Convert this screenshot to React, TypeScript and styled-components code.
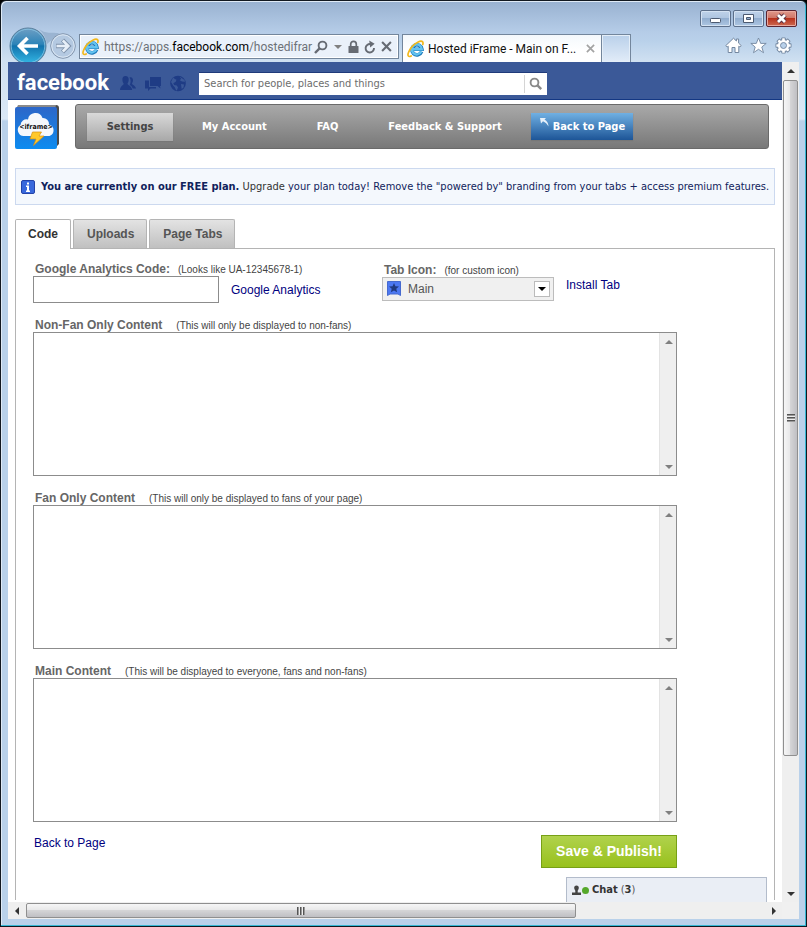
import React from "react";
import styled, { createGlobalStyle, css } from "styled-components";

const ui = `"DejaVu Sans Condensed", "Noto Sans", sans-serif`;
const chrome = `Roboto, "Noto Sans", sans-serif`;
const arial = `"Liberation Sans", Arial, sans-serif`;

const Global = createGlobalStyle`
  *, *::before, *::after { box-sizing: border-box; }
  body { margin: 0; background: #000; font-family: ${arial}; }
  button, input, textarea, select { font: inherit; margin: 0; border-radius: 0; }
  svg { display: block; flex: none; }
`;

/* ---------- window frame ---------- */

const Window = styled.div`
  display: flex;
  flex-direction: column;
  min-height: 100vh;
  padding: 0 7px 7px;
  border: 1px solid #111820;
  border-radius: 6px 6px 0 0;
  background: linear-gradient(#98b1d0 0, #a9c1de 18px, #b6cde8 32px, #b9d1ea 40px, #cfe0f1 60px, #dbe8f5 118px, #b9d1ea 120px);
  box-shadow: inset -1px -1px 0 #35b8d4, inset 1px 1px 0 #dfeaf6;
`;

const TitleBar = styled.div`
  display: flex;
  justify-content: flex-end;
  gap: 2px;
  height: 33px;
  padding: 9px 2px 0 0;
`;

const CaptionButton = styled.button<{ $danger?: boolean }>`
  display: grid;
  place-items: center;
  width: 31px;
  height: 17px;
  padding: 0;
  border: 1px solid ${(p) => (p.$danger ? "#5b2430" : "#5c6f8a")};
  border-radius: 2px;
  box-shadow: inset 0 0 0 1px ${(p) => (p.$danger ? "#e9a99f" : "#d4e2f2")};
  background: ${(p) =>
    p.$danger
      ? "linear-gradient(#e0998c, #cf7465 48%, #b8321d 50%, #cd6a50)"
      : "linear-gradient(#bfd2e9, #aec5e0 48%, #92aecf 50%, #adc6e2)"};
`;

const NavRow = styled.div`
  display: flex;
  align-items: flex-end;
  height: 28px;
  padding: 0 7px 0 1px;
`;

const RoundButton = styled.button<{ $lift?: boolean }>`
  flex: none;
  padding: 0;
  border: 0;
  background: none;
  margin: 0 3px ${(p) => (p.$lift ? 3 : 0)}px 0;
`;

const AddressBar = styled.div`
  display: flex;
  align-items: center;
  flex: 0 1 320px;
  min-width: 0;
  height: 25px;
  margin: 0 3px 3px 0;
  padding: 0 6px 0 2px;
  border: 1px solid #73869c;
  background: #eaf1fa;
  box-shadow: inset 0 0 0 1px #fff;
`;

const Url = styled.div`
  flex: 1;
  min-width: 0;
  margin-left: 4px;
  overflow: hidden;
  white-space: nowrap;
  font: 12px/18px ${chrome};
  color: #6d7178;
  b { font-weight: 400; color: #000; }
`;

const AddressTools = styled.div`
  display: flex;
  align-items: center;
  gap: 5px;
`;

const IconButton = styled.button`
  flex: none;
  padding: 0;
  border: 0;
  background: none;
`;

const BrowserTab = styled.div`
  display: flex;
  align-items: center;
  flex: 0 1 200px;
  min-width: 0;
  height: 28px;
  padding: 0 6px 0 4px;
  border: 1px solid #73869c;
  border-bottom: 0;
  background: linear-gradient(#f4f8fc, #fff 60%);
`;

const TabTitle = styled.span`
  flex: 1;
  margin-left: 3px;
  overflow: hidden;
  white-space: nowrap;
  font: 12px/18px ${chrome};
  color: #111;
`;

const NewTab = styled.button`
  flex: none;
  width: 29px;
  height: 28px;
  border: 1px solid #73869c;
  border-width: 1px 1px 0 0;
  background: linear-gradient(#b9d0ea, #e2ecf8);
  box-shadow: inset 0 0 0 1px #e4eef8;
`;

const ChromeTools = styled.div`
  display: flex;
  gap: 8px;
  margin-left: auto;
  padding-bottom: 8px;
`;

/* ---------- viewport and scroll bars ---------- */

const Viewport = styled.div`
  display: grid;
  flex: 1;
  grid-template-columns: minmax(0, 1fr) 17px;
  grid-template-rows: 1fr 17px;
  background: #f0f0f0;
`;

const Page = styled.div`
  position: relative;
  display: flex;
  flex-direction: column;
  overflow: hidden;
  background: #fff;
`;

const VBar = styled.div`
  display: flex;
  flex-direction: column;
  align-items: center;
  background: #efefef;
`;

const HBar = styled.div`
  display: flex;
  align-items: center;
  background: #efefef;
`;

const Arrow = styled.span<{ $dir: "up" | "down" | "left" | "right"; $soft?: boolean; $slim?: boolean }>`
  display: grid;
  place-items: center;
  flex: none;
  width: ${(p) => (p.$slim ? 10 : 17)}px;
  height: 17px;
  &::before {
    content: "";
    border: 4px solid transparent;
    ${(p) => {
      const c = p.$soft ? "#808080" : "#333";
      if (p.$dir === "up") return css`border-top: 0; border-bottom-color: ${c};`;
      if (p.$dir === "down") return css`border-bottom: 0; border-top-color: ${c};`;
      if (p.$dir === "left") return css`border-left: 0; border-right-color: ${c};`;
      return css`border-right: 0; border-left-color: ${c};`;
    }}
  }
`;

const VThumb = styled.div`
  display: grid;
  place-items: center;
  flex: 676;
  width: 15px;
  margin-top: 1px;
  border: 1px solid #8f8f8f;
  border-radius: 2px;
  background: linear-gradient(90deg, #f6f6f6, #e8e8e9 45%, #d4d4d6 50%, #bfbfc3);
`;

const HThumb = styled.div`
  display: grid;
  place-items: center;
  flex: 549;
  height: 15px;
  margin-left: 1px;
  border: 1px solid #8f8f8f;
  border-radius: 2px;
  background: linear-gradient(#f6f6f6, #e8e8e9 45%, #d4d4d6 50%, #bfbfc3);
`;

const Rest = styled.div<{ $share: number }>`
  flex: ${(p) => p.$share};
`;

const Grip = styled.span<{ $upright?: boolean }>`
  width: 8px;
  height: 8px;
  background: repeating-linear-gradient(
    ${(p) => (p.$upright ? "90deg" : "180deg")},
    #555 0, #555 1px, #999 1px, #999 2px, #eee 2px, #eee 3px
  );
`;

/* ---------- facebook bar ---------- */

const BlueBar = styled.header`
  display: flex;
  align-items: center;
  height: 38px;
  padding: 5px 0 0 9px;
  border-bottom: 1px solid #133783;
  background: #3b5998;
`;

const Wordmark = styled.a`
  width: 103px;
  color: #fff;
  text-decoration: none;
  font: 700 22px/28px Roboto, sans-serif;
`;

const Jewels = styled.div`
  display: flex;
  gap: 9px;
  margin-right: 13px;
`;

const Search = styled.form`
  display: flex;
  flex: 0 1 348px;
  min-width: 0;
  height: 23px;
  border: 1px solid #1f3a7a;
  border-width: 1px 0 0;
  background: #fff;
  input {
    flex: 1;
    min-width: 0;
    padding: 0 5px;
    border: 0;
    background: none;
    outline: 0;
    font: 11px/20px ${ui};
    color: #777;
  }
  input::placeholder { color: #6d6d6d; opacity: 1; }
  button {
    display: grid;
    place-items: center;
    width: 23px;
    margin: 2px 0;
    padding: 0;
    border: 0;
    border-left: 1px solid #d5d5d5;
    background: none;
  }
`;

/* ---------- app toolbar ---------- */

const AppHead = styled.div`
  display: flex;
  align-items: center;
  gap: 16px;
  padding: 4px 13px 0 7px;
`;

const Toolbar = styled.nav`
  display: flex;
  flex: 1;
  align-items: center;
  height: 45px;
  padding: 0 11px;
  border: 1px solid #6a6a6a;
  border-radius: 3px;
  background: linear-gradient(#a9a9a9, #787878);
`;

const ToolLink = styled.a<{ $kind?: "active" | "primary"; $near?: boolean }>`
  margin-left: ${(p) => (p.$near ? 29 : 50)}px;
  font: 700 11px/28px ${ui};
  color: #fff;
  text-decoration: none;
  white-space: nowrap;
  ${(p) =>
    p.$kind === "active" &&
    css`
      min-width: 86px;
      margin: 0;
      text-align: center;
      color: #444;
      background: linear-gradient(#d9d9d9, #a8a8a8);
      box-shadow: 0 1px 1px #777;
    `}
  ${(p) =>
    p.$kind === "primary" &&
    css`
      display: flex;
      gap: 4px;
      padding: 0 8px 0 9px;
      line-height: 27px;
      background: linear-gradient(#70b0e3, #1d5597);
      box-shadow: 0 1px 1px #777;
      svg { margin-top: 5px; }
    `}
`;

const Notice = styled.div`
  display: flex;
  align-items: center;
  gap: 6px;
  height: 37px;
  margin: 19px 7px 14px;
  padding-left: 5px;
  border: 1px solid #ccd9ef;
  background: #f4f8fd;
  font: 11px/16px ${ui};
  color: #10235c;
  white-space: nowrap;
  em { font-style: normal; color: #333; }
`;

/* ---------- tabbed panel ---------- */

const Tabs = styled.div`
  display: flex;
  gap: 2px;
  margin: 0 7px -1px;
`;

const Tab = styled.button<{ $on?: boolean }>`
  position: relative;
  height: ${(p) => (p.$on ? 30 : 29)}px;
  padding: ${(p) => (p.$on ? "0 12px 2px" : "0 12px 0 13px")};
  border: 1px solid #b4b4b4;
  border-bottom: 0;
  border-radius: 2px 2px 0 0;
  background: ${(p) => (p.$on ? "#fff" : "linear-gradient(#e3e3e3, #c0c0c0)")};
  font: 700 12px/26px ${arial};
  color: ${(p) => (p.$on ? "#333" : "#555")};
`;

const Panel = styled.form`
  flex: 1;
  margin: 0 7px 2px;
  padding: 12px 97px 0 17px;
  border: 1px solid #b4b4b4;
  border-bottom: 0;
`;

const TopRow = styled.div`
  display: flex;
  margin-bottom: 14px;
`;

const Column = styled.div<{ $width?: number; $drop?: boolean }>`
  width: ${(p) => (p.$width ? `${p.$width}px` : "auto")};
  padding-top: ${(p) => (p.$drop ? 1 : 0)}px;
`;

const LabelRow = styled.div<{ $gap: number }>`
  display: flex;
  gap: ${(p) => p.$gap}px;
  height: 15px;
  padding-left: 2px;
  line-height: 17px;
  white-space: nowrap;
  label { font-size: 12px; font-weight: 700; color: #666; }
  span { font-size: 10px; color: #444; }
`;

const Inline = styled.div<{ $top?: boolean }>`
  display: flex;
  align-items: ${(p) => (p.$top ? "flex-start" : "center")};
  gap: 12px;
`;

const CodeInput = styled.input`
  width: 186px;
  height: 27px;
  padding: 0 5px;
  border: 1px solid #8c8c8c;
  background: #fff;
  font-size: 12px;
`;

const Link = styled.a`
  font-size: 12px;
  line-height: 16px;
  color: #000080;
  text-decoration: none;
  white-space: nowrap;
`;

const Picker = styled.div`
  position: relative;
  width: 172px;
  height: 24px;
  select {
    appearance: none;
    width: 100%;
    height: 100%;
    padding: 0 24px 0 25px;
    border: 1px solid #bcbcbc;
    background: #f0f0f0;
    font-size: 12px;
    color: #555;
  }
  > svg { position: absolute; top: 4px; left: 5px; pointer-events: none; }
`;

const PickerArrow = styled.span`
  position: absolute;
  top: 4px;
  right: 4px;
  display: grid;
  place-items: center;
  width: 16px;
  height: 16px;
  border: 1px solid #bbb;
  background: #fff;
  pointer-events: none;
  &::before {
    content: "";
    border: 4px solid transparent;
    border-top-color: #000;
    border-bottom: 0;
  }
`;

const Editor = styled.div`
  display: flex;
  height: 144px;
  margin-bottom: 14px;
  border: 1px solid #8c8c8c;
  textarea {
    flex: 1;
    min-width: 0;
    padding: 4px;
    border: 0;
    outline: 0;
    resize: none;
    overflow: hidden;
    background: #fff;
    font-size: 12px;
  }
`;

const EditorRail = styled.div`
  display: flex;
  flex-direction: column;
  justify-content: space-between;
  width: 17px;
  border-left: 1px solid #e3e3e3;
  background: #efefef;
`;

const Actions = styled.div`
  display: flex;
  justify-content: space-between;
  margin-top: -1px;
  padding-left: 1px;
`;

const Save = styled.button`
  width: 136px;
  height: 33px;
  padding: 0 0 2px;
  border: 1px solid #77a016;
  background: linear-gradient(#b0d24c, #98c11d);
  font: 700 14px/28px ${arial};
  color: #fff;
`;

const Chat = styled.button`
  position: absolute;
  right: 15px;
  bottom: 0;
  display: flex;
  align-items: center;
  width: 201px;
  height: 25px;
  padding: 0 5px;
  border: 1px solid #b3bccb;
  border-bottom: 0;
  background: #eaeef5;
  font: 700 11px/24px ${ui};
  color: #333;
  span { font-weight: 400; margin-left: 3px; color: #555; }
  b { color: #333; }
`;

const ChatDot = styled.i`
  width: 7px;
  height: 7px;
  margin: 0 3px 0 1px;
  border-radius: 50%;
  background: #55a82b;
`;

/* ---------- drawings ---------- */

const IeLogo = () => (
  <svg width="18" height="18" viewBox="0 0 18 18" aria-hidden="true">
    <path d="M14.600 11.600A5 5 0 1 1 14.900 9.300H5" fill="none" stroke="#1b78ba" strokeWidth="3.600" />
    <path d="M14.300 11.600A5 5 0 1 1 14.800 9.300H5" fill="none" stroke="#63c3f0" strokeWidth="2.400" />
    <path d="M4.200 16C1.200 17.400.2 15.600 1.600 12.200 3.200 8.400 7.200 4 11.200 2c3-1.500 5.600-.9 4.600 2.400" fill="none" stroke="#f2b81c" strokeWidth="1.700" strokeLinecap="round" />
  </svg>
);

const BackArt = () => (
  <svg width="38" height="35" viewBox="0 0 38 35" aria-hidden="true">
    <defs>
      <linearGradient id="backFill" x1="0" y1="0" x2="0" y2="1">
        <stop offset="0" stopColor="#6f9fc4" />
        <stop offset=".45" stopColor="#2d84b8" />
        <stop offset=".5" stopColor="#1273ad" />
        <stop offset="1" stopColor="#35b9e6" />
      </linearGradient>
    </defs>
    <circle cx="19" cy="19" r="18" fill="url(#backFill)" stroke="#5a7f9c" />
    <circle cx="19" cy="19" r="16.800" fill="none" stroke="#8cc6e4" strokeWidth=".8" />
    <path d="M29 19H11M18.500 11 10.500 19l8 8" fill="none" stroke="#fff" strokeWidth="3.600" />
  </svg>
);

const ForwardArt = () => (
  <svg width="26" height="26" viewBox="0 0 26 26" aria-hidden="true" overflow="visible">
    <path d="M-11-4C-5 1 2-.5 9 0L4 5-3 11C-4 5-7 0-11-4z" fill="#8ea9c8" opacity=".7" />
    <circle cx="13" cy="13" r="12.300" fill="#b4c9e1" stroke="#8496ad" />
    <circle cx="13" cy="13" r="11.200" fill="none" stroke="#dbe7f3" />
    <path d="M6 13h11.500M12.500 7l6 6-6 6" fill="none" stroke="#7f93ac" strokeWidth="4.400" />
    <path d="M6.500 13h11.500M12.800 7.500l5.500 5.500-5.500 5.500" fill="none" stroke="#e6eef7" strokeWidth="2.600" />
  </svg>
);

const HomeArt = () => (
  <svg width="17" height="17" viewBox="0 0 17 17" aria-hidden="true">
    <path d="M8.500 1.200.8 8.600 2.200 10l1-.8v6.300h3.800v-5h3v5h3.800V9.200l1 .8 1.400-1.400-2.600-2.500V2h-2.200v2z" fill="#fff" stroke="#72869f" />
  </svg>
);

const StarArt = () => (
  <svg width="17" height="17" viewBox="0 0 17 17" aria-hidden="true">
    <path d="m8.500 1 2.200 5.400h5.500l-4.400 3.600 1.700 5.700-5-3.400-5 3.400L5.200 10 .8 6.400h5.500z" fill="#fff" stroke="#72869f" strokeWidth=".9" />
  </svg>
);

const GearArt = () => (
  <svg width="17" height="17" viewBox="-8.500 -8.500 17 17" aria-hidden="true">
    {[0, 45, 90, 135].map((a) => (
      <rect key={a} x="-2.200" y="-8" width="4.400" height="16" rx=".8" fill="#72869f" transform={`rotate(${a})`} />
    ))}
    <circle r="6.400" fill="#72869f" />
    {[0, 45, 90, 135].map((a) => (
      <rect key={a} x="-1.300" y="-7.200" width="2.600" height="14.400" rx=".5" fill="#fff" transform={`rotate(${a})`} />
    ))}
    <circle r="5.600" fill="#fff" />
    <circle r="3" fill="#b9d1ea" stroke="#72869f" strokeWidth=".9" />
  </svg>
);

const Lens = ({ color, flip }: { color: string; flip?: boolean }) => (
  <svg width="14" height="14" viewBox="0 0 14 14" aria-hidden="true">
    <circle cx={flip ? 8.500 : 5.500} cy="5.500" r="3.900" fill="none" stroke={color} strokeWidth="1.900" />
    <path d={flip ? "M5.800 8.200 1 13" : "m8.200 8.200 4 4"} stroke={color} strokeWidth="2.400" />
  </svg>
);

const LockArt = () => (
  <svg width="11" height="14" viewBox="0 0 11 14" aria-hidden="true">
    <path d="M2.700 6.500V4.200a2.800 2.800 0 0 1 5.600 0v2.300" fill="none" stroke="#666b73" strokeWidth="1.700" />
    <rect x=".5" y="6" width="10" height="7" rx=".6" fill="#666b73" />
  </svg>
);

const ReloadArt = () => (
  <svg width="12" height="14" viewBox="0 0 12 14" aria-hidden="true">
    <path d="M10 8A4.200 4.200 0 1 1 6.500 4.100" fill="none" stroke="#666b73" strokeWidth="1.900" />
    <path d="M5.200.6 10.600 3.800 6.200 7.400z" fill="#666b73" />
  </svg>
);

const CrossArt = ({ color, size }: { color: string; size: number }) => (
  <svg width={size} height={size} viewBox="0 0 10 10" aria-hidden="true">
    <path d="m1 1 8 8M9 1 1 9" stroke={color} strokeWidth="1.900" />
  </svg>
);

const JewelArt = ({ kind }: { kind: "friends" | "messages" | "world" }) => (
  <svg width="16" height="17" viewBox="0 0 16 17" fill="#1f3c85" aria-hidden="true">
    {kind === "friends" && (
      <>
        <path d="M9.500 2.500c2-.9 3.700.5 3.500 3-.1 1.500-.7 2.300-1 3.200 0 1 3.600 1.700 4 4.800h-3.300c-.5-2-1.700-2.800-3-3.600 1.200-2 1.400-5.400-.2-7.400z" />
        <path d="M5.500 1c2.200 0 3.400 1.600 3.200 4-.1 1.700-.8 2.800-1.200 3.800 0 1.400 4.300 2 4.700 6.200H0c.3-4.200 3.700-4.800 3.700-6.200C3.200 7.800 2.500 6.700 2.400 5c-.2-2.400 1-4 3.100-4z" />
      </>
    )}
    {kind === "messages" && (
      <>
        <path d="M5 2h11v9h-1l.5 2.500L12.500 11H5z" />
        <path d="M0 5.500h4V12h7v1.500H5.500L3 16v-2.500H0z" />
      </>
    )}
    {kind === "world" && (
      <>
        <circle cx="8" cy="8.500" r="7.800" />
        <path d="M3 2.800c2 .7 1.500 1.700 3.500 1.900l-.8 2.100-2.400 1.400.8 1.800 2.700.4 1.200 2-1.300 3.300c-1.700-1.300-1.200-3.500-3.200-4.700L1 7zM9.500 1.500l1.700 2.200-1.500 1.600 2.300 1.200 3 .2-.5-1.700zM11 9l3 .5-.5 3-1.800 1.500z" fill="#3b5998" />
      </>
    )}
  </svg>
);

const AppLogo = () => (
  <svg width="44" height="44" viewBox="0 0 44 44" role="img" aria-label="iframe">
    <defs>
      <linearGradient id="appSky" x1="0" y1="0" x2="0" y2="1">
        <stop offset="0" stopColor="#2c66c8" />
        <stop offset="1" stopColor="#0d8cf0" />
      </linearGradient>
    </defs>
    <path d="M3 0h38q3 0 3 3v36l-3 3V5z" fill="#4b4b4b" />
    <path d="M3 0h38l-1 4H1z" fill="#8a8a8a" />
    <rect y="2" width="42" height="42" rx="2" fill="url(#appSky)" />
    <path d="M9 31a6 6 0 0 1-3.500-11A6 6 0 0 1 13 14.500 7.500 7.500 0 0 1 27.500 13 6 6 0 0 1 34 19.500a6 6 0 0 1 .5 11.500z" fill="#f5f8fc" />
    <text x="21" y="24" textAnchor="middle" fontFamily="DejaVu Sans Condensed, sans-serif" fontWeight="700" fontSize="7" fill="#111">
      &lt;iframe&gt;
    </text>
    <path d="M17.500 27h9l-2.500 4h5L18.500 40.500l2.500-6.500h-6z" fill="#ffc82a" stroke="#d98f10" strokeWidth=".7" />
  </svg>
);

const InfoArt = () => (
  <svg width="14" height="14" viewBox="0 0 14 14" aria-hidden="true">
    <rect x=".5" y=".5" width="13" height="13" rx="1.500" fill="#3868dc" stroke="#2443a8" />
    <path d="M6 2.500h2v2H6zM5 5.500h3v5h1V12H5v-1.500h1V7H5z" fill="#fff" />
  </svg>
);

const BookmarkArt = () => (
  <svg width="14" height="15" viewBox="0 0 14 15" aria-hidden="true">
    <path d="M.5.5h13v14L11 13H3L.5 14.500z" fill="#4c78f2" stroke="#4569cf" />
    <path d="m7 2 1.400 3.200 3.600.3-2.700 2.300.8 3.500L7 9.500l-3.100 1.800.8-3.500L2 5.500l3.600-.3z" fill="#203a80" />
  </svg>
);

const HookArt = () => (
  <svg width="9" height="9" viewBox="0 0 9 9" aria-hidden="true">
    <path d="M0 0h6L4.500 1.600C7 3 8.300 5 8.500 8.500 7 6 5.500 4.300 3 3.300L1 5.500z" fill="#e7f1fa" />
  </svg>
);

const PersonArt = () => (
  <svg width="9" height="11" viewBox="0 0 9 11" aria-hidden="true">
    <path d="M4.500.5c1.600 0 2.400 1 2.300 2.500C6.700 4.600 5.700 5 5.700 6v1.500H9V10H0V7.500h3.300V6c0-1-1-1.400-1.100-3C2.100 1.500 2.900.5 4.500.5z" fill="#444" />
  </svg>
);

const CaptionArt = ({ kind }: { kind: "min" | "max" | "close" }) => (
  <svg width="13" height="11" viewBox="0 0 13 11" aria-hidden="true">
    {kind === "min" && <rect x="1.500" y="5.500" width="10" height="4" rx=".8" fill="#fff" stroke="#4c5a70" />}
    {kind === "max" && (
      <path d="M1.500 1.500h10v8h-10zM4.500 4.500v2h4v-2z" fillRule="evenodd" fill="#fff" stroke="#4c5a70" />
    )}
    {kind === "close" && (
      <>
        <path d="m3 2 7 7m0-7-7 7" stroke="#5a3040" strokeWidth="4.600" />
        <path d="m3 2 7 7m0-7-7 7" stroke="#fff" strokeWidth="2.800" />
      </>
    )}
  </svg>
);

/* ---------- page ---------- */

const sections = [
  { id: "nonfan", label: "Non-Fan Only Content", hint: "(This will only be displayed to non-fans)" },
  { id: "fan", label: "Fan Only Content", hint: "(This will only be displayed to fans of your page)" },
  { id: "main", label: "Main Content", hint: "(This will be displayed to everyone, fans and non-fans)" },
];

export default function App() {
  return (
    <Window>
      <Global />
      <TitleBar>
        <CaptionButton aria-label="Minimize"><CaptionArt kind="min" /></CaptionButton>
        <CaptionButton aria-label="Maximize"><CaptionArt kind="max" /></CaptionButton>
        <CaptionButton $danger aria-label="Close"><CaptionArt kind="close" /></CaptionButton>
      </TitleBar>
      <NavRow>
        <RoundButton aria-label="Back"><BackArt /></RoundButton>
        <RoundButton $lift aria-label="Forward"><ForwardArt /></RoundButton>
        <AddressBar>
          <IeLogo />
          <Url>https://apps.<b>facebook.com</b>/hostedifrar</Url>
          <AddressTools>
            <IconButton aria-label="Search"><Lens color="#666b73" flip /></IconButton>
            <Arrow $dir="down" $soft $slim />
            <IconButton aria-label="Security"><LockArt /></IconButton>
            <IconButton aria-label="Refresh"><ReloadArt /></IconButton>
            <IconButton aria-label="Stop"><CrossArt color="#666b73" size={11} /></IconButton>
          </AddressTools>
        </AddressBar>
        <BrowserTab>
          <IeLogo />
          <TabTitle>Hosted iFrame - Main on F...</TabTitle>
          <IconButton aria-label="Close tab"><CrossArt color="#a3a3a3" size={9} /></IconButton>
        </BrowserTab>
        <NewTab aria-label="New tab" />
        <ChromeTools>
          <IconButton aria-label="Home"><HomeArt /></IconButton>
          <IconButton aria-label="Favorites"><StarArt /></IconButton>
          <IconButton aria-label="Tools"><GearArt /></IconButton>
        </ChromeTools>
      </NavRow>

      <Viewport>
        <Page>
          <BlueBar>
            <Wordmark href="#">facebook</Wordmark>
            <Jewels>
              <IconButton aria-label="Friend requests"><JewelArt kind="friends" /></IconButton>
              <IconButton aria-label="Messages"><JewelArt kind="messages" /></IconButton>
              <IconButton aria-label="Notifications"><JewelArt kind="world" /></IconButton>
            </Jewels>
            <Search role="search">
              <input aria-label="Search" placeholder="Search for people, places and things" />
              <button type="button" aria-label="Search"><Lens color="#8a8a8a" /></button>
            </Search>
          </BlueBar>

          <AppHead>
            <AppLogo />
            <Toolbar>
              <ToolLink href="#" $kind="active">Settings</ToolLink>
              <ToolLink href="#" $near>My Account</ToolLink>
              <ToolLink href="#">FAQ</ToolLink>
              <ToolLink href="#">Feedback &amp; Support</ToolLink>
              <ToolLink href="#" $kind="primary" $near><HookArt />Back to Page</ToolLink>
            </Toolbar>
          </AppHead>

          <Notice>
            <InfoArt />
            <span>
              <strong>You are currently on our FREE plan.</strong> <em>Upgrade</em> your plan today! Remove the "powered by" branding from your tabs + access premium features.
            </span>
          </Notice>

          <Tabs role="tablist">
            <Tab $on role="tab" aria-selected="true">Code</Tab>
            <Tab role="tab" aria-selected="false">Uploads</Tab>
            <Tab role="tab" aria-selected="false">Page Tabs</Tab>
          </Tabs>

          <Panel>
            <TopRow>
              <Column $width={349}>
                <LabelRow $gap={8}>
                  <label htmlFor="ga">Google Analytics Code:</label>
                  <span>(Looks like UA-12345678-1)</span>
                </LabelRow>
                <Inline>
                  <CodeInput id="ga" />
                  <Link href="#">Google Analytics</Link>
                </Inline>
              </Column>
              <Column $drop>
                <LabelRow $gap={8}>
                  <label htmlFor="icon">Tab Icon:</label>
                  <span>(for custom icon)</span>
                </LabelRow>
                <Inline $top>
                  <Picker>
                    <select id="icon" defaultValue="Main"><option>Main</option></select>
                    <BookmarkArt />
                    <PickerArrow />
                  </Picker>
                  <Link href="#">Install Tab</Link>
                </Inline>
              </Column>
            </TopRow>

            {sections.map((s) => (
              <div key={s.id}>
                <LabelRow $gap={14}>
                  <label htmlFor={s.id}>{s.label}</label>
                  <span>{s.hint}</span>
                </LabelRow>
                <Editor>
                  <textarea id={s.id} />
                  <EditorRail>
                    <Arrow $dir="up" $soft />
                    <Arrow $dir="down" $soft />
                  </EditorRail>
                </Editor>
              </div>
            ))}

            <Actions>
              <Link href="#">Back to Page</Link>
              <Save type="button">Save &amp; Publish!</Save>
            </Actions>
          </Panel>

          <Chat>
            <PersonArt />
            <ChatDot />
            Chat<span>(<b>3</b>)</span>
          </Chat>
        </Page>

        <VBar>
          <Arrow $dir="up" />
          <VThumb><Grip /></VThumb>
          <Rest $share={129} />
          <Arrow $dir="down" />
        </VBar>
        <HBar>
          <Arrow $dir="left" />
          <HThumb><Grip $upright /></HThumb>
          <Rest $share={190} />
          <Arrow $dir="right" />
        </HBar>
      </Viewport>
    </Window>
  );
}
